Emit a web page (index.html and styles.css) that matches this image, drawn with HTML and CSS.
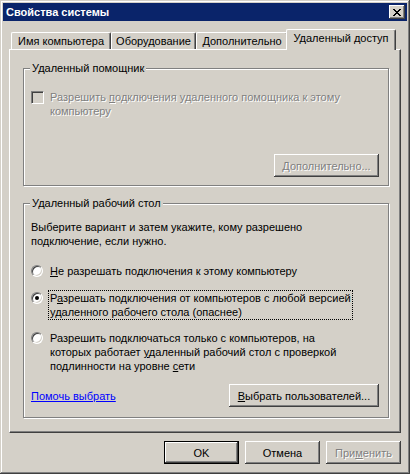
FILE: index.html
```html
<!DOCTYPE html>
<html lang="ru">
<head>
    <meta charset="UTF-8" />
    <title>Свойства системы</title>
    <link rel="stylesheet" href="styles.css">
</head>
<body>
<div class="window">
    <div class="titlebar">
        <span class="title">Свойства системы</span>
        <span class="close-btn">
            <svg width="8" height="7" viewBox="0 0 8 7" shape-rendering="crispEdges">
                <path d="M0 0h2v1h-2zM6 0h2v1h-2zM1 1h2v1h-2zM5 1h2v1h-2zM2 2h4v1h-4zM3 3h2v1h-2zM2 4h4v1h-4zM1 5h2v1h-2zM5 5h2v1h-2zM0 6h2v1h-2zM6 6h2v1h-2z" fill="#000"/>
            </svg>
        </span>
    </div>

    <div class="tabs">
        <div class="tab tab-name">Имя компьютера</div>
        <div class="tab tab-hw">Оборудование</div>
        <div class="tab tab-adv">Дополнительно</div>
        <div class="tab tab-remote active">Удаленный доступ</div>
    </div>

    <div class="panel">
        <div class="group group-assist">
            <span class="group-title">Удаленный помощник</span>
            <div class="option disabled">
                <span class="checkbox"></span>
                <span class="option-text">Разрешить <u>п</u>одключения удаленного помощника к этому<br>компьютеру</span>
            </div>
            <div class="group-actions">
                <button class="btn btn-wide" disabled><u>Д</u>ополнительно...</button>
            </div>
        </div>

        <div class="group group-desktop">
            <span class="group-title">Удаленный рабочий стол</span>
            <p class="hint">Выберите вариант и затем укажите, кому разрешено<br>подключение, если нужно.</p>
            <div class="option radio-1">
                <span class="radio"></span>
                <span class="option-text"><u>Н</u>е разрешать подключения к этому компьютеру</span>
            </div>
            <div class="option radio-2">
                <span class="radio checked"></span>
                <span class="option-text focused">Р<u>а</u>зрешать подключения от компьютеров с любой версией<br>удаленного рабочего стола (опаснее)</span>
            </div>
            <div class="option radio-3">
                <span class="radio"></span>
                <span class="option-text">Разрешить подключаться только с компьютеров, на<br>которых работает <u>у</u>даленный рабочий стол с проверкой<br>подлинности на уровне <u>с</u>ети</span>
            </div>
            <div class="group-footer">
                <a href="#" class="help-link">Помочь выбрать</a>
                <button class="btn btn-users"><u>В</u>ыбрать пользователей...</button>
            </div>
        </div>
    </div>

    <div class="dialog-buttons">
        <button class="btn btn-default">OK</button>
        <button class="btn">Отмена</button>
        <button class="btn" disabled>При<u>м</u>енить</button>
    </div>
</div>
</body>
</html>
```

FILE: styles.css
```css
body {
    margin: 0;
    padding: 0;
    background-color: #d4d0c8;
    font-family: "Liberation Sans", Arial, sans-serif;
    font-size: 11px;
    color: #000;
}
.window {
    width: 410px;
    height: 474px;
    box-sizing: border-box;
    padding: 3px;
    background: #d4d0c8;
    box-shadow: inset -1px -1px #404040, inset 1px 1px #d4d0c8, inset -2px -2px #808080, inset 2px 2px #fff;
}
.titlebar {
    display: flex;
    align-items: center;
    justify-content: space-between;
    height: 18px;
    padding: 0 2px 0 3px;
    background: #0a246a;
}
.title {
    color: #fff;
    font-weight: bold;
    font-size: 11px;
}
.close-btn {
    display: flex;
    align-items: center;
    justify-content: center;
    width: 16px;
    height: 14px;
    box-sizing: border-box;
    background: #d4d0c8;
    box-shadow: inset -1px -1px #404040, inset 1px 1px #fff, inset -2px -2px #808080;
}

/* tabs */
.tabs {
    display: flex;
    align-items: flex-end;
    height: 20px;
    margin-top: 8px;
    padding-left: 8px;
}
.tab {
    height: 17px;
    box-sizing: border-box;
    padding-top: 2px;
    text-align: center;
    border-top: 1px solid #fff;
    border-left: 1px solid #fff;
    border-right: 1px solid #404040;
    box-shadow: inset -1px 0 #808080;
    border-radius: 2px 2px 0 0;
}
.tab-name { width: 100px; }
.tab-hw { width: 85px; }
.tab-adv { width: 92px; }
.tab-remote { width: 110px; }
.tab.active {
    position: relative;
    z-index: 1;
    height: 21px;
    margin: 0 0 -1px -2px;
    padding-top: 2px;
    background: #d4d0c8;
}

/* page */
.panel {
    height: 384px;
    box-sizing: border-box;
    margin: 0 6px;
    padding: 18px 11px 0 13px;
    border-top: 1px solid #fff;
    border-left: 1px solid #fff;
    border-right: 1px solid #404040;
    border-bottom: 1px solid #404040;
    box-shadow: inset -1px -1px #808080;
}
.group {
    position: relative;
    display: flex;
    flex-direction: column;
    border: 1px solid #808080;
    box-shadow: inset 1px 1px #fff, 1px 1px #fff;
}
.group-title {
    position: absolute;
    top: -8px;
    left: 6px;
    padding: 0 2px;
    line-height: 14px;
    background: #d4d0c8;
}
.group-assist {
    height: 118px;
    box-sizing: border-box;
    padding: 21px 9px 8px 7px;
}
.group-actions {
    display: flex;
    justify-content: flex-end;
    margin-top: auto;
}
.group-desktop {
    margin-top: 17px;
    padding: 16px 9px 10px 7px;
}
.hint {
    margin: 0 0 16px;
    line-height: 14px;
}
.option {
    display: flex;
    align-items: flex-start;
    line-height: 14px;
}
.option-text u,
.btn u {
    text-decoration: underline;
}
.radio-2 { margin-top: 13px; }
.radio-3 { margin-top: 12px; }
.option-text.focused {
    outline: 1px dotted #000;
    outline-offset: 0;
    margin-left: -1px;
    padding: 0 1px;
}
.disabled .option-text {
    color: #808080;
    text-shadow: 1px 1px #fff;
}
.checkbox {
    flex: none;
    width: 13px;
    height: 13px;
    box-sizing: border-box;
    margin: 1px 6px 0 0;
    background: #d4d0c8;
    border: 1px solid;
    border-color: #808080 #fff #fff #808080;
    box-shadow: inset 1px 1px #404040, inset -1px -1px #d4d0c8;
}
.radio {
    position: relative;
    flex: none;
    width: 12px;
    height: 12px;
    box-sizing: border-box;
    margin: 1px 7px 0 0;
    border-radius: 50%;
    background: #fff;
    border: 1px solid;
    border-color: #808080 #fff #fff #808080;
    box-shadow: inset 1px 1px #404040, inset -1px -1px #d4d0c8;
}
.radio.checked::after {
    content: "";
    position: absolute;
    top: 3px;
    left: 3px;
    width: 4px;
    height: 4px;
    border-radius: 50%;
    background: #000;
}
.group-footer {
    display: flex;
    align-items: center;
    justify-content: space-between;
    margin-top: 11px;
}
.help-link {
    color: #0000ff;
    text-decoration: underline;
}

/* buttons */
.btn {
    height: 23px;
    width: 75px;
    padding: 0;
    font-family: inherit;
    font-size: 11px;
    color: #000;
    background: #d4d0c8;
    border: none;
    border-radius: 0;
    box-shadow: inset -1px -1px #404040, inset 1px 1px #fff, inset -2px -2px #808080;
}
.btn:disabled {
    color: #808080;
    text-shadow: 1px 1px #fff;
}
.btn-wide { width: 105px; }
.btn-users { width: 150px; }
.btn-default {
    border: 1px solid #000;
    box-shadow: inset -1px -1px #404040, inset 1px 1px #fff, inset -2px -2px #808080;
}
.dialog-buttons {
    display: flex;
    justify-content: flex-end;
    gap: 6px;
    margin-top: 8px;
    padding-right: 6px;
}
```
